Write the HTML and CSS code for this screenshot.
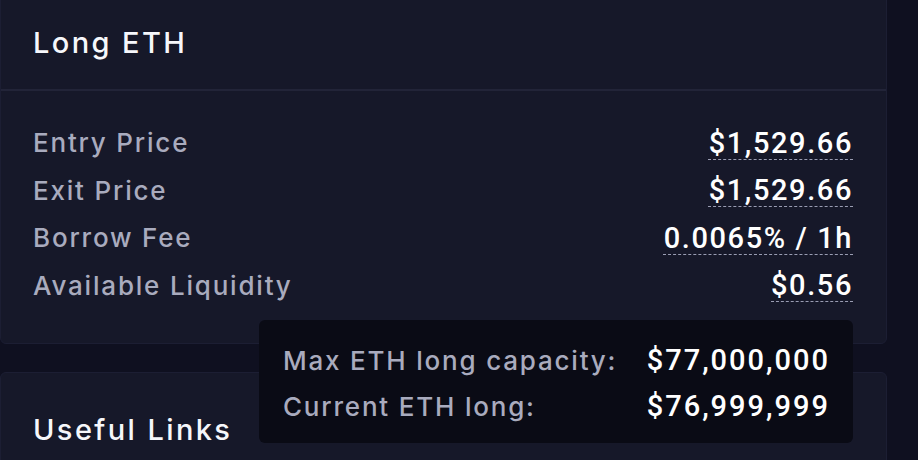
FILE: index.html
```html
<!DOCTYPE html>
<html>
<head>
<meta charset="utf-8">
<link rel="stylesheet" href="styles.css">
</head>
<body>
<div class="page">
  <section class="card card-top">
    <header class="card-header">
      <h2 class="card-title">Long ETH</h2>
    </header>
    <div class="card-body">
      <div class="row"><span class="label">Entry Price</span><span class="value">$1,529.66</span></div>
      <div class="row"><span class="label">Exit Price</span><span class="value">$1,529.66</span></div>
      <div class="row"><span class="label">Borrow Fee</span><span class="value">0.0065% / 1h</span></div>
      <div class="row"><span class="label">Available Liquidity</span><span class="value">$0.56</span></div>
    </div>
  </section>
  <section class="card card-links">
    <header class="card-header links-header">
      <h2 class="card-title">Useful Links</h2>
    </header>
  </section>
  <div class="tooltip">
    <span class="tip-label">Max ETH long capacity:</span><span class="tip-value">$77,000,000</span>
    <span class="tip-label">Current ETH long:</span><span class="tip-value">$76,999,999</span>
  </div>
</div>
</body>
</html>
```
FILE: styles.css
```css
html, body {
  margin: 0;
  padding: 0;
  background: #0f1020;
  overflow: hidden;
  height: 460px;
}
.page {
  position: relative;
  width: 887px;
  display: flex;
  flex-direction: column;
  gap: 28px;
  font-family: Inter, "Liberation Sans", sans-serif;
}
.card {
  background: #161829;
  border: 1px solid #1c1e33;
  border-radius: 6px;
  box-sizing: border-box;
}
.card-top {
  margin-top: -15px;
}
.card-header {
  padding: 39px 32px 28px;
  border-bottom: 2px solid #222438;
}
.links-header {
  border-bottom: none;
}
.card-title {
  margin: 0;
  font-size: 29px;
  line-height: 36px;
  font-weight: 500;
  letter-spacing: 2.4px;
  color: #f6f7fb;
}
.card-body {
  padding: 28px 33px 34px 32px;
}
.row {
  display: flex;
  justify-content: space-between;
  align-items: center;
  height: 47.5px;
}
.label {
  font-size: 26px;
  font-weight: 500;
  letter-spacing: 1.8px;
  color: #a9abbe;
}
.value {
  font-family: Roboto, "Liberation Sans", sans-serif;
  font-size: 29px;
  font-weight: 500;
  letter-spacing: 1.6px;
  color: #ffffff;
  text-decoration: underline dashed #9a9db3;
  text-decoration-thickness: 1px;
  text-underline-offset: 6px;
}
.tooltip {
  position: absolute;
  left: 259px;
  top: 320px;
  width: 594px;
  height: 123px;
  box-sizing: border-box;
  padding: 17px 23px 11px 24px;
  background: #0a0b15;
  border-radius: 6px;
  display: grid;
  grid-template-columns: 1fr auto;
  grid-auto-rows: 46px;
  align-items: center;
}
.tip-label {
  font-size: 26px;
  font-weight: 500;
  letter-spacing: 1.8px;
  color: #a9abbe;
}
.tip-value {
  font-family: Roboto, "Liberation Sans", sans-serif;
  font-size: 29px;
  font-weight: 500;
  letter-spacing: 2px;
  color: #ffffff;
}
```
